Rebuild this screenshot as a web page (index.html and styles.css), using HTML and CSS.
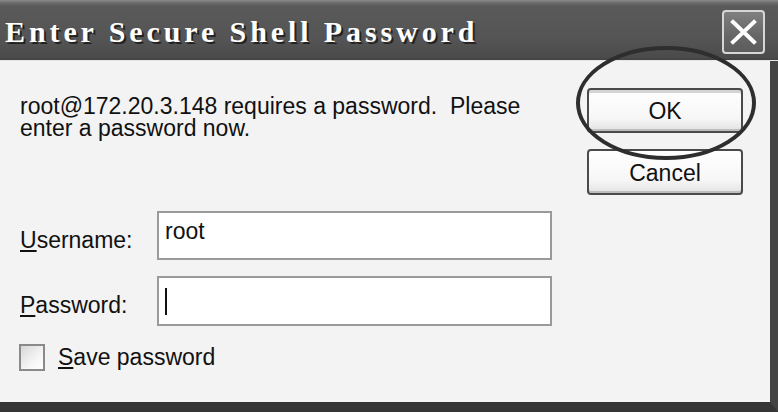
FILE: index.html
```html
<!doctype html>
<html>
<head>
	<meta charset="utf-8">
	<title>Enter Secure Shell Password</title>
	<link rel="stylesheet" href="styles.css">
</head>
<body>

	<div id="dialog">
		<div class="titlebar">
			<span class="titletext">Enter Secure Shell Password</span>
			<span class="closebtn">
				<svg width="27" height="26" viewBox="0 0 27 26"><path d="M3 3 L24 23 M24 3 L3 23" stroke="#fff" stroke-width="4" stroke-linecap="square"/></svg>
			</span>
		</div>

		<div class="content">
			<div class="main">
				<p class="message">root@172.20.3.148 requires a password.&nbsp; Please enter a password now.</p>

				<div class="fields">
					<label class="fieldlabel"><u>U</u>sername:</label>
					<div class="field">root</div>
					<label class="fieldlabel"><u>P</u>assword:</label>
					<div class="field"><span class="caret"></span></div>
				</div>

				<div class="saverow">
					<span class="checkbox"></span>
					<span><u>S</u>ave password</span>
				</div>
			</div>

			<div class="buttons">
				<div class="btn btn-ok">OK</div>
				<div class="btn">Cancel</div>
			</div>
		</div>

		<!--hand-drawn circle round the OK button-->
		<svg class="circlemark" width="186" height="120" viewBox="0 0 186 120"><ellipse cx="92" cy="59" rx="88" ry="55" fill="none" stroke="#2e2e2e" stroke-width="4"/></svg>
	</div>

</body>
</html>
```

FILE: styles.css
```css
* {margin:0; padding:0; box-sizing:border-box;}
body {width:778px; height:412px; background:#f3f3f3; font:23px "Liberation Sans", Arial, sans-serif; color:#111; overflow:hidden;}

#dialog {position:relative; width:778px; height:412px; display:flex; flex-direction:column;}

.titlebar {height:61px; display:flex; align-items:center; justify-content:space-between; padding:0 13px 0 5px; background:linear-gradient(#8a8a8a 0, #6a6a6a 3px, #5a5a5a 6px, #545454 40px, #4a4a4a 58px, #3c3c3c 61px); border-bottom:1px solid #e6e6e6;}
.titletext {font:bold 30px "Liberation Serif", "Times New Roman", serif; letter-spacing:3.9px; color:#fff; text-shadow:2px 2px 0 #222; margin-top:4px;}
.closebtn {width:43px; height:44px; border:2px solid #d6d6d6; border-radius:4px; background:linear-gradient(#808080, #666 60%, #5c5c5c); display:flex; align-items:center; justify-content:center; margin-top:3px;}

.content {flex:1; display:flex; border-right:8px solid #444; border-bottom:10px solid #353535;}

.main {flex:1; padding:34px 0 0 20px;}
.message {width:530px; line-height:22px;}

.fields {display:grid; grid-template-columns:137px 395px; row-gap:16px; align-items:center; margin-top:72px;}
.fieldlabel {padding-top:9px;}
.field {height:49px; background:#fff; border:2px solid #9a9a9a; padding:0 6px 8px; display:flex; align-items:center;}
.field .caret {display:block; width:2px; height:27px; background:#111; margin-top:8px;}
.fields .field:last-child {height:50px;}

.saverow {display:flex; align-items:center; gap:13px; margin-top:18px; margin-left:-1px;}
.checkbox {width:26px; height:27px; border:2px solid #8a8a8a; background:linear-gradient(135deg, #d8d8d8, #f4f4f4 60%, #fff);}

.buttons {display:flex; flex-direction:column; gap:16px; padding:27px 27px 0 0;}
.btn {width:156px; height:45px; border:2px solid #4a4a4a; border-radius:4px; background:linear-gradient(#fff, #f6f6f6 70%, #e2e2e2); box-shadow:inset 0 -2px 0 #bdbdbd; display:flex; align-items:center; justify-content:center; padding-top:2px;}
.btn + .btn {height:46px;}
.btn-ok {box-shadow:inset 0 3px 0 #d4d4d4, inset 0 -2px 0 #bdbdbd;}

.circlemark {position:absolute; left:574px; top:44px;}
```
